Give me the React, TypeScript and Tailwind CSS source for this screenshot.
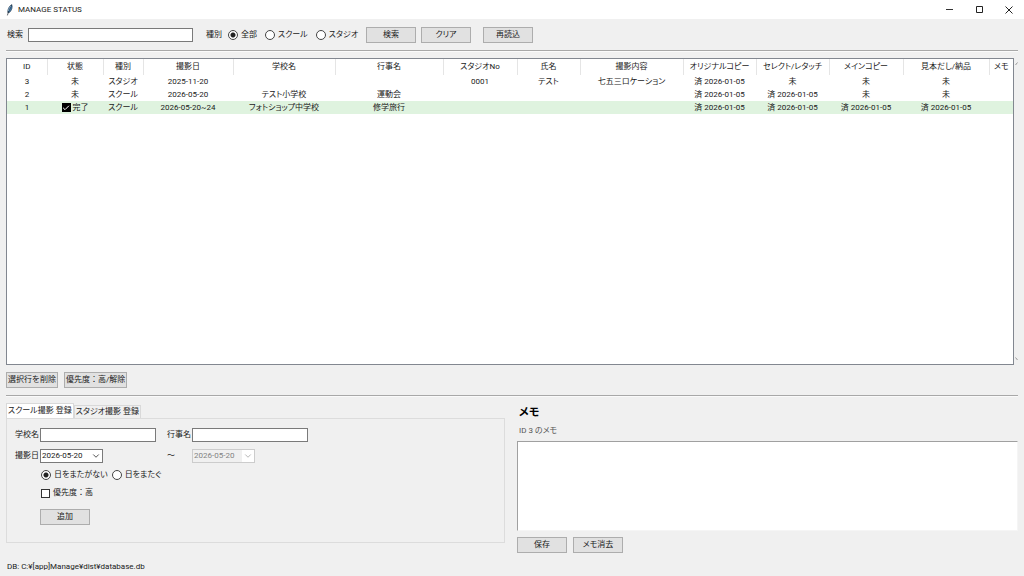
import { useState } from "react";
import type { ReactNode } from "react";
import { ChevronDown, Check } from "lucide-react";

type Shoot = {
  id: number;
  done: boolean;
  cells: string[];
};

const columns = [
  { name: "ID", width: "w-[40px]" },
  { name: "状態", width: "w-[56px]" },
  { name: "種別", width: "w-[40px]" },
  { name: "撮影日", width: "w-[90px]" },
  { name: "学校名", width: "w-[102px]" },
  { name: "行事名", width: "w-[108px]" },
  { name: "スタジオNo", width: "w-[74px]" },
  { name: "氏名", width: "w-[63px]" },
  { name: "撮影内容", width: "w-[103px]" },
  { name: "オリジナルコピー", width: "w-[73px]" },
  { name: "セレクト/レタッチ", width: "w-[73px]" },
  { name: "メインコピー", width: "w-[74px]" },
  { name: "見本だし/納品", width: "w-[86px]" },
  { name: "メモ", width: "w-auto" },
];

const shoots: Shoot[] = [
  {
    id: 3,
    done: false,
    cells: ["スタジオ", "2025-11-20", "", "", "0001", "テスト", "七五三ロケーション", "済 2026-01-05", "未", "未", "未", ""],
  },
  {
    id: 2,
    done: false,
    cells: ["スクール", "2026-05-20", "テスト小学校", "運動会", "", "", "", "済 2026-01-05", "済 2026-01-05", "未", "未", ""],
  },
  {
    id: 1,
    done: true,
    cells: ["スクール", "2026-05-20~24", "フォトショップ中学校", "修学旅行", "", "", "", "済 2026-01-05", "済 2026-01-05", "済 2026-01-05", "済 2026-01-05", ""],
  },
];

const inputClass = "h-[14px] border border-[#7a7a7a] bg-white px-0.5 outline-none";

function Button({ children, fit = false }: { children: ReactNode; fit?: boolean }) {
  return (
    <button
      type="button"
      className={`h-4 flex items-center justify-center whitespace-nowrap border border-[#adadad] bg-[#e1e1e1] hover:border-[#0078d7] hover:bg-[#e5f1fb] ${fit ? "px-px [font-feature-settings:normal]" : "w-[50px]"}`}
    >
      {children}
    </button>
  );
}

function Radio({
  name,
  label,
  checked,
  onChange,
}: {
  name: string;
  label: string;
  checked: boolean;
  onChange: () => void;
}) {
  return (
    <label className="flex items-center gap-[3px] whitespace-nowrap">
      <input
        type="radio"
        name={name}
        checked={checked}
        onChange={onChange}
        className="size-[10px] shrink-0 appearance-none rounded-full border border-[#444] bg-white checked:bg-[radial-gradient(circle,#222_2px,#fff_3px)]"
      />
      {label}
    </label>
  );
}

function DateSelect({ id, label, disabled = false }: { id: string; label: string; disabled?: boolean }) {
  return (
    <div className="relative w-[63px]">
      <select
        id={id}
        aria-label={label}
        disabled={disabled}
        className="block h-[14px] w-full appearance-none border border-[#7a7a7a] bg-white pl-px leading-3 outline-none disabled:border-[#cccccc] disabled:bg-[#f0f0f0] disabled:text-[#838383] disabled:opacity-100"
      >
        <option>2026-05-20</option>
      </select>
      <span
        className={`pointer-events-none absolute inset-y-px right-px flex w-3 items-center justify-center bg-white ${disabled ? "text-[#aaa]" : "text-[#333]"}`}
      >
        <ChevronDown size={10} strokeWidth={2} />
      </span>
    </div>
  );
}

function Separator() {
  return <div className="mx-1.5 h-0.5 shrink-0 border-t border-b border-t-[#a8a8a8] border-b-[#fafafa]" />;
}

export default function App() {
  const [kind, setKind] = useState("全部");
  const [span, setSpan] = useState("single");
  const [tab, setTab] = useState("school");

  return (
    <div
      lang="ja"
      className="flex min-h-screen flex-col bg-[#f0f0f0] font-['Roboto','Noto_Sans_CJK_JP',sans-serif] text-[8px] leading-3 text-[#1a1a1a] [font-feature-settings:'palt']"
    >
      {/* Title bar */}
      <header className="flex h-[19px] shrink-0 items-center bg-white pl-1.5">
        <svg width="8" height="12" viewBox="0 0 8 12" aria-hidden="true">
          <path d="M5.8.5C3.6 1.8 1.9 4.400 1.700 7.400l.3 1.500 1.800-.7C5.600 6.400 6.900 3.200 5.800.5Z" fill="#3d74a3" stroke="#2a3d50" strokeWidth=".6" />
          <path d="M5.5 1.200C4.400 3.400 2.800 6 1.400 11.400" fill="none" stroke="#18222c" strokeWidth=".7" />
          <path d="M4.800 2.200C3.500 3.600 2.700 5.200 2.500 7" fill="none" stroke="#a9cbe6" strokeWidth=".7" />
        </svg>
        <h1 className="ml-1">MANAGE STATUS</h1>
        <div className="ml-auto flex h-full items-center">
          <button type="button" aria-label="最小化" className="flex h-full w-[30px] items-center justify-center">
            <svg width="7" height="7" viewBox="0 0 7 7" aria-hidden="true">
              <path d="M0 3.5h7" stroke="#333" />
            </svg>
          </button>
          <button type="button" aria-label="最大化" className="flex h-full w-[30px] items-center justify-center">
            <svg width="7" height="7" viewBox="0 0 7 7" aria-hidden="true">
              <path d="M.5.5h6v6h-6z" fill="none" stroke="#222" />
            </svg>
          </button>
          <button type="button" aria-label="閉じる" className="flex h-full w-[30px] items-center justify-center">
            <svg width="8" height="8" viewBox="0 0 8 8" aria-hidden="true">
              <path d="M.5.5l7 7M7.5.5l-7 7" stroke="#222" />
            </svg>
          </button>
        </div>
      </header>

      {/* Search */}
      <form className="flex h-[31px] shrink-0 items-center px-[7px]">
        <label htmlFor="search" className="w-[21px]">検索</label>
        <input id="search" type="text" className={`${inputClass} w-[165px]`} />
        <fieldset className="ml-[13px] flex w-[160px] items-center gap-2">
          <div className="flex items-center gap-1.5">
            <span>種別</span>
            <Radio name="kind" label="全部" checked={kind === "全部"} onChange={() => setKind("全部")} />
          </div>
          <Radio name="kind" label="スクール" checked={kind === "スクール"} onChange={() => setKind("スクール")} />
          <Radio name="kind" label="スタジオ" checked={kind === "スタジオ"} onChange={() => setKind("スタジオ")} />
        </fieldset>
        <div className="flex gap-[5px]">
          <Button>検索</Button>
          <Button>クリア</Button>
        </div>
        <div className="ml-3">
          <Button>再読込</Button>
        </div>
      </form>
      <Separator />

      {/* List */}
      <div className="mt-1.5 flex flex-1 px-1.5">
        <div className="min-w-0 flex-1 border border-[#828790] bg-white">
          <table className="w-full table-fixed border-collapse text-center whitespace-nowrap">
            <thead>
              <tr className="h-4">
                {columns.map((column) => (
                  <th key={column.name} className={`${column.width} border-r border-[#e5e5e5] p-0 font-normal last:border-r-0`}>
                    {column.name}
                  </th>
                ))}
              </tr>
            </thead>
            <tbody>
              {shoots.map((shoot) => (
                <tr key={shoot.id} className={`h-[13px] ${shoot.done ? "bg-[#dff3df]" : ""}`}>
                  <td className="p-0">{shoot.id}</td>
                  <td className="p-0">
                    {shoot.done ? (
                      <span className="flex items-center justify-center gap-0.5">
                        <span className="flex size-[9px] items-center justify-center bg-black text-white">
                          <Check size={8} strokeWidth={3} />
                        </span>
                        完了
                      </span>
                    ) : (
                      "未"
                    )}
                  </td>
                  {shoot.cells.map((cell, i) => (
                    <td key={i} className="p-0">{cell}</td>
                  ))}
                </tr>
              ))}
            </tbody>
          </table>
        </div>
        <div className="flex w-1 flex-col items-end justify-between py-1 text-[#999]">
          <svg width="3" height="4" viewBox="0 0 3 4" aria-hidden="true">
            <path d="M.5 3 2.5.5" stroke="currentColor" />
          </svg>
          <svg width="3" height="4" viewBox="0 0 3 4" aria-hidden="true">
            <path d="M.5.5 2.5 3" stroke="currentColor" />
          </svg>
        </div>
      </div>

      <div className="my-[7px] flex gap-1.5 px-1.5">
        <Button fit>選択行を削除</Button>
        <Button fit>優先度：高/解除</Button>
      </div>
      <Separator />

      <main className="mt-1.5 grid grid-cols-[499fr_501fr] gap-3 px-1.5">
        {/* Registration */}
        <section className="flex min-w-0 flex-col">
          <div role="tablist" className="flex h-[15px] items-end">
            {[
              { id: "school", name: "スクール撮影 登録" },
              { id: "studio", name: "スタジオ撮影 登録" },
            ].map((item) => (
              <button
                key={item.id}
                type="button"
                role="tab"
                aria-selected={tab === item.id}
                onClick={() => setTab(item.id)}
                className={`border border-b-0 border-[#d9d9d9] px-px whitespace-nowrap ${tab === item.id ? "h-[15px] bg-white" : "h-[13px]"}`}
              >
                {item.name}
              </button>
            ))}
          </div>
          <div className="h-[125px] border border-[#dcdcdc] pt-[9px] pl-2">
            <div className="grid grid-cols-[25px_116px_36px_116px] items-center gap-y-[7px] whitespace-nowrap">
              <label htmlFor="school-name">学校名</label>
              <input id="school-name" type="text" className={inputClass} />
              <label htmlFor="event-name" className="pl-[11px]">行事名</label>
              <input id="event-name" type="text" className={inputClass} />
              <label htmlFor="date-from">撮影日</label>
              <DateSelect id="date-from" label="撮影日" />
              <span className="pl-[11px]">～</span>
              <DateSelect id="date-to" label="終了日" disabled={span === "single"} />
            </div>
            <div className="ml-[26px] flex flex-col items-start pt-1.5">
              <div className="flex gap-1">
                <Radio name="span" label="日をまたがない" checked={span === "single"} onChange={() => setSpan("single")} />
                <Radio name="span" label="日をまたぐ" checked={span === "multi"} onChange={() => setSpan("multi")} />
              </div>
              <label className="mt-1.5 flex items-center gap-[3px] [font-feature-settings:normal]">
                <input type="checkbox" className="size-[9px] appearance-none border border-[#333] bg-white checked:bg-[#333]" />
                優先度：高
              </label>
            </div>
            <div className="mt-2.5 ml-[25px]">
              <Button>追加</Button>
            </div>
          </div>
        </section>

        {/* Memo */}
        <section className="flex min-w-0 flex-col">
          <h2 className="mt-0.5 px-0.5 text-[11px] leading-4 font-bold text-black">メモ</h2>
          <label htmlFor="memo" className="mt-1 mb-1 px-0.5 text-[#555]">ID 3 のメモ</label>
          <textarea
            id="memo"
            className="block h-[90px] w-full resize-none border border-[#f5f5f5] border-t-[#a0a0a0] border-l-[#a0a0a0] bg-white p-0.5 outline-none"
          />
          <div className="mt-1.5 flex gap-1.5">
            <Button>保存</Button>
            <Button>メモ消去</Button>
          </div>
        </section>
      </main>

      <footer className="flex h-[23px] shrink-0 items-center px-[7px] pt-1">DB: C:¥[app]Manage¥dist¥database.db</footer>
    </div>
  );
}
